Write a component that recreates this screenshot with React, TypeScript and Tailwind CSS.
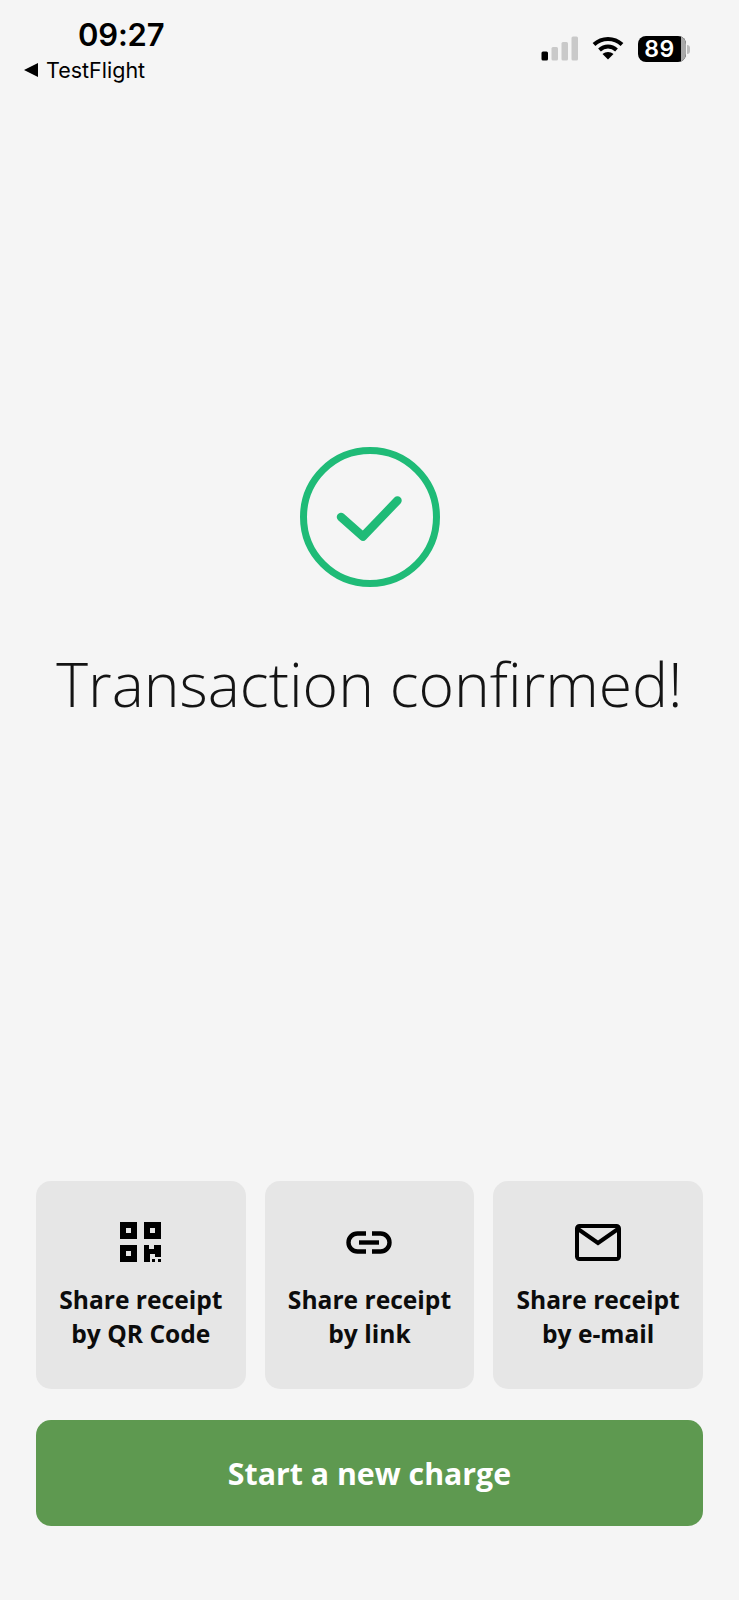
function SignalIcon() {
  return (
    <svg width="37" height="26" viewBox="0 0 37 26">
      <rect x="0.5" y="15.5" width="6.5" height="9" rx="1.5" fill="#000" />
      <rect x="10.5" y="11" width="6.5" height="13.5" rx="1.5" fill="#c9c9c9" />
      <rect x="20.5" y="6" width="6.5" height="18.5" rx="1.5" fill="#c9c9c9" />
      <rect x="30.5" y="0.5" width="6.5" height="24" rx="1.5" fill="#c9c9c9" />
    </svg>
  );
}

function WifiIcon() {
  return (
    <svg width="32" height="24" viewBox="0 0 32 24" fill="none">
      <path d="M2 8.5C10 1 22 1 30 8.5" stroke="#000" strokeWidth="4" />
      <path d="M7.5 14C12.5 9.4 19.5 9.4 24.5 14" stroke="#000" strokeWidth="4" />
      <path d="M16 23.5L10.5 18C13.5 15.3 18.5 15.3 21.5 18Z" fill="#000" />
    </svg>
  );
}

function CheckCircle() {
  return (
    <svg width="140" height="140" viewBox="0 0 140 140" fill="none">
      <circle cx="70" cy="70" r="66.5" stroke="#1fbb77" strokeWidth="7" />
      <path
        d="M41 70L63 89.5L97.5 53.5"
        stroke="#1fbb77"
        strokeWidth="8.5"
        strokeLinecap="round"
        strokeLinejoin="round"
      />
    </svg>
  );
}

function QrIcon() {
  return (
    <svg width="41" height="40" viewBox="0 0 41 40">
      <path
        fillRule="evenodd"
        d="M0 0H17V17H0ZM6 6V11H11V6ZM24 0H41V17H24ZM30 6V11H35V6ZM0 23H17V40H0ZM6 29V34H11V29Z"
        fill="#000"
      />
      <path d="M24 23H29V27H34V23H41V35H35V32H30V40H24Z" fill="#000" />
      <rect x="32" y="37" width="3" height="3" fill="#000" />
      <rect x="38" y="37" width="3" height="3" fill="#000" />
    </svg>
  );
}

function LinkIcon() {
  return (
    <svg width="46" height="23" viewBox="0 0 46 23" fill="none">
      <path
        d="M20 2.5H11.5C6.5 2.5 2.5 6.5 2.5 11.5C2.5 16.5 6.5 20.5 11.5 20.5H20"
        stroke="#000"
        strokeWidth="4.4"
      />
      <path
        d="M26 2.5H34.5C39.5 2.5 43.5 6.5 43.5 11.5C43.5 16.5 39.5 20.5 34.5 20.5H26"
        stroke="#000"
        strokeWidth="4.4"
      />
      <path d="M13 11.5H33" stroke="#000" strokeWidth="4.4" />
    </svg>
  );
}

function MailIcon() {
  return (
    <svg width="46" height="37" viewBox="0 0 46 37" fill="none">
      <rect x="2" y="2" width="42" height="33" rx="2.5" stroke="#000" strokeWidth="4" />
      <path d="M3 5L23 19L43 5" stroke="#000" strokeWidth="4" />
    </svg>
  );
}

const shareOptions = [
  { icon: <QrIcon />, lines: ["Share receipt", "by QR Code"] },
  { icon: <LinkIcon />, lines: ["Share receipt", "by link"] },
  { icon: <MailIcon />, lines: ["Share receipt", "by e-mail"] },
];

export default function App() {
  return (
    <div className="flex h-[1600px] flex-col overflow-hidden bg-[#f5f5f5] font-['Open_Sans',sans-serif] text-black">
      <header className="flex h-[90px] justify-between pl-6 pr-[49px] font-['Inter',sans-serif]">
        <div className="pt-[16px]">
          <div className="pl-[54px] text-[31px] leading-[38px] font-semibold tracking-[-0.2px]">
            09:27
          </div>
          <div className="mt-[3px] flex items-center gap-[8px] text-[21.5px] leading-[26px] font-normal">
            <span className="h-0 w-0 border-y-[7px] border-r-[14px] border-y-transparent border-r-black" />
            <span>TestFlight</span>
          </div>
        </div>
        <div className="flex items-start gap-[14px] pt-[36px]">
          <SignalIcon />
          <WifiIcon />
          <div className="flex items-center">
            <div className="flex h-[26px] w-[48px] overflow-hidden rounded-[8px] bg-black">
              <span className="flex-1 text-center text-[23px] leading-[26px] font-semibold tracking-[0.6px] text-white">
                89
              </span>
              <span className="w-[5px] bg-[#a9a9a9]" />
            </div>
            <span className="ml-[1px] h-[9px] w-[3px] rounded-r-full bg-[#bdbdbd]" />
          </div>
        </div>
      </header>

      <main className="flex flex-1 flex-col items-center pt-[357px]">
        <CheckCircle />
        <h1 className="mt-[55px] text-[60.6px] leading-[84px] font-light whitespace-nowrap text-[#141414]">
          Transaction confirmed!
        </h1>
      </main>

      <section className="flex flex-col gap-[31px] px-9 pb-[74px]">
        <div className="grid grid-cols-3 gap-[19px]">
          {shareOptions.map((option) => (
            <button
              key={option.lines[1]}
              className="flex h-[208px] flex-col items-center rounded-[15px] bg-[#e6e6e6] pt-[37px]"
            >
              <span className="flex h-12 items-center justify-center">{option.icon}</span>
              <span className="mt-[17px] text-[24.6px] leading-[33.5px] font-bold text-[#0c0c0c]">
                {option.lines[0]}
                <br />
                {option.lines[1]}
              </span>
            </button>
          ))}
        </div>
        <button className="h-[106px] rounded-[15px] bg-[#5e9950] pt-[2px] text-[30.3px] font-bold text-white">
          Start a new charge
        </button>
      </section>
    </div>
  );
}
